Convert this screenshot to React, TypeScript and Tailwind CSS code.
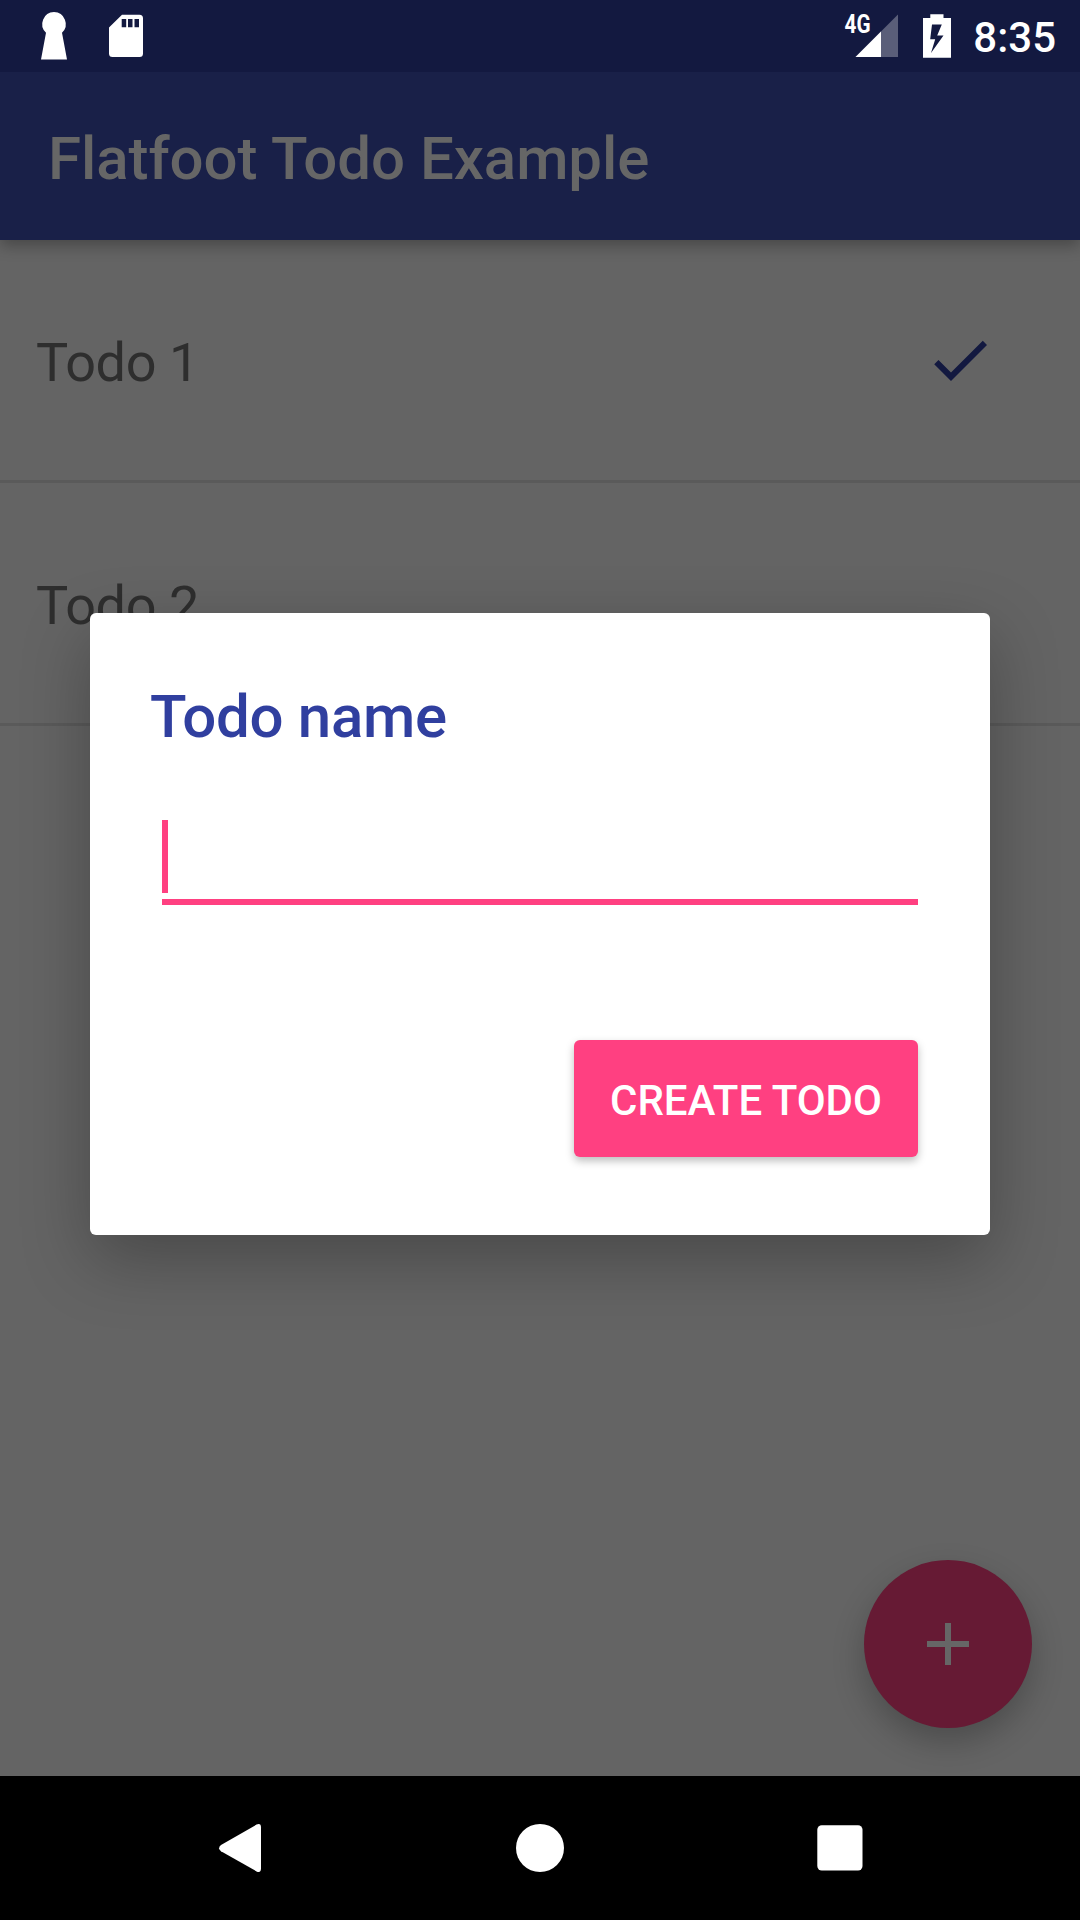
import React from "react";

function StatusBar() {
  return (
    <header className="relative z-10 flex h-[72px] items-start justify-between bg-[#131940] text-white">
      <div className="flex">
        <svg className="ml-[36px] h-[72px] w-[36px]" viewBox="36 0 36 72" fill="currentColor">
          <path d="M54 12a12 12 0 0 1 8 20.700L67 59.500H41L46 32.700A12 12 0 0 1 54 12z" />
        </svg>
        <svg className="ml-[33px] h-[72px] w-[42px]" viewBox="105 0 42 72" fill="currentColor">
          <path
            fillRule="evenodd"
            d="M122 14.700H139.500a3.500 3.500 0 0 1 3.500 3.500V53.500a3.500 3.500 0 0 1-3.500 3.500H112.500a3.500 3.500 0 0 1-3.500-3.500V27.500zM121.700 19v8.300h4.500V19zM128 19v8.300h4.500V19zM134.500 19v8.300h4.500V19z"
          />
        </svg>
      </div>
      <div className="flex">
        <svg className="h-[72px] w-[60px]" viewBox="843 0 60 72" fill="currentColor">
          <path d="M898 14.500V57H855.500z" opacity="0.3" />
          <path d="M881 31.500V57H855.500z" />
          <text
            x="844.600"
            y="33.300"
            fontFamily="Roboto"
            fontWeight="700"
            fontSize="25"
            textLength="26"
            lengthAdjust="spacingAndGlyphs"
          >
            4G
          </text>
        </svg>
        <svg className="ml-[17px] h-[72px] w-[34px]" viewBox="920 0 34 72" fill="currentColor">
          <path
            fillRule="evenodd"
            d="M930.300 14.200h13.200V18H951V57.700H923V18h7.300zM932 24.500L930.200 39.300H935.200L931 53L943.500 35.500H937.200L941.800 24.500z"
          />
        </svg>
        <span className="mr-[24px] ml-[19px] mt-[14px] text-[42px] leading-[48px] font-medium">8:35</span>
      </div>
    </header>
  );
}

function TodoRow({ label, done }: { label: string; done?: boolean }) {
  return (
    <li className="flex h-[243px] items-center justify-between border-b-[3px] border-[#5a5a5a] pr-[84px] pl-[36px]">
      <span className="pt-[5px] text-[54px] leading-[64px] tracking-[-0.4px] text-[#2e2e2e]">{label}</span>
      {done && (
        <svg className="size-[72px]" viewBox="0 0 24 24" fill="#131940">
          <path d="M9 16.170L4.830 12l-1.420 1.410L9 19 21 7l-1.410-1.410z" />
        </svg>
      )}
    </li>
  );
}

function NavigationBar() {
  return (
    <nav className="flex h-[144px] items-center justify-center gap-[228px] bg-black text-white">
      <svg className="size-[72px]" viewBox="0 0 72 72" fill="currentColor">
        <path d="M17 33L52.500 12.600Q57 10.800 57 15.500V56.500Q57 61.200 52.500 59.400L17 39.300Q13.200 36.150 17 33z" />
      </svg>
      <svg className="size-[72px]" viewBox="0 0 72 72" fill="currentColor">
        <circle cx="36" cy="36" r="24" />
      </svg>
      <svg className="size-[72px]" viewBox="0 0 72 72" fill="currentColor">
        <rect x="13.300" y="13.300" width="45.200" height="45.200" rx="4.500" />
      </svg>
    </nav>
  );
}

function CreateTodoDialog() {
  return (
    <section
      role="dialog"
      className="absolute top-[613px] left-[90px] flex h-[622px] w-[900px] flex-col rounded-[6px] bg-white pr-[72px] pl-[60px] shadow-[0_24px_68px_rgba(0,0,0,0.28)]"
    >
      <h2 className="mt-[69px] text-[60px] leading-[70px] font-medium tracking-[-0.3px] text-[#303f9f]">Todo name</h2>
      <div className="mt-[68px] ml-[12px] h-[85px] border-b-[6px] border-[#ff4081]">
        <div className="h-[73px] w-[6px] bg-[#ff4081]" />
      </div>
      <button className="mt-[135px] h-[117px] w-[344px] self-end rounded-[6px] bg-[#ff4081] pt-[4px] text-[42px] leading-[48px] font-medium whitespace-nowrap text-white shadow-[0_4px_8px_rgba(0,0,0,0.26)]">
        CREATE TODO
      </button>
    </section>
  );
}

export default function App() {
  return (
    <div className="relative flex h-[1920px] w-[1080px] flex-col overflow-hidden bg-[#646464] font-['Roboto',sans-serif]">
      <StatusBar />
      <div className="relative flex h-[168px] items-center bg-[#192048] pl-[48px] shadow-[0_6px_14px_rgba(0,0,0,0.28)]">
        <h1 className="pt-[5px] text-[60px] leading-[70px] font-medium tracking-[-0.06px] text-[#666666]">Flatfoot Todo Example</h1>
      </div>
      <main className="flex-1">
        <ul>
          <TodoRow label="Todo 1" done />
          <TodoRow label="Todo 2" />
        </ul>
      </main>
      <NavigationBar />
      <button className="absolute top-[1560px] left-[864px] flex size-[168px] items-center justify-center rounded-full bg-[#661a34] shadow-[0_14px_32px_rgba(0,0,0,0.24)]">
        <svg className="size-[72px]" viewBox="0 0 24 24" fill="#666666">
          <path d="M19 13h-6v6h-2v-6H5v-2h6V5h2v6h6v2z" />
        </svg>
      </button>
      <CreateTodoDialog />
    </div>
  );
}
